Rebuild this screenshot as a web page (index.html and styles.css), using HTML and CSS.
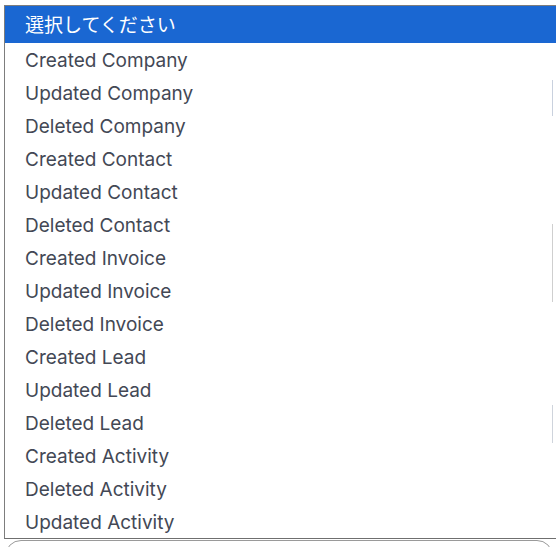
FILE: index.html
```html
<!DOCTYPE html>
<html lang="ja">
<head>
<meta charset="utf-8">
<title>Select</title>
<link rel="stylesheet" href="styles.css">
</head>
<body>
<div class="page">
  <ul class="listbox">
    <li class="option selected">選択してください</li>
    <li class="option">Created Company</li>
    <li class="option">Updated Company</li>
    <li class="option">Deleted Company</li>
    <li class="option">Created Contact</li>
    <li class="option">Updated Contact</li>
    <li class="option">Deleted Contact</li>
    <li class="option">Created Invoice</li>
    <li class="option">Updated Invoice</li>
    <li class="option">Deleted Invoice</li>
    <li class="option">Created Lead</li>
    <li class="option">Updated Lead</li>
    <li class="option">Deleted Lead</li>
    <li class="option">Created Activity</li>
    <li class="option">Deleted Activity</li>
    <li class="option">Updated Activity</li>
  </ul>
  <div class="field-under"></div>
  <span class="edge edge-a"></span>
  <span class="edge edge-b"></span>
  <span class="edge edge-c"></span>
</div>
</body>
</html>
```
FILE: styles.css
```css
html, body {
  margin: 0;
  padding: 0;
  background: #ffffff;
  overflow: hidden;
}
.page {
  position: relative;
  width: 556px;
  height: 547px;
  padding-top: 5px;
  box-sizing: border-box;
  overflow: hidden;
}
.listbox {
  list-style: none;
  margin: 0 0 0 4px;
  padding: 0;
  width: 560px;
  border-top: 1px solid #7d7d7d;
  border-left: 1px solid #7d7d7d;
  border-bottom: 1px solid #6f6f6f;
  background: #ffffff;
  font-family: Inter, "Noto Sans CJK JP", sans-serif;
  font-size: 19px;
  color: #434855;
  position: relative;
  z-index: 1;
}
.option {
  height: 33px;
  line-height: 33px;
  padding: 1px 0 0 20px;
  box-sizing: border-box;
  white-space: nowrap;
}
.option.selected {
  height: 37px;
  line-height: 34px;
  padding-top: 3px;
  background: #1a67d2;
  color: #ffffff;
}
.field-under {
  margin: 1px 3px 0 5px;
  height: 60px;
  border: 1px solid #9a9a9a;
  border-radius: 16px;
}
.edge {
  position: absolute;
  left: 552px;
  width: 1px;
  z-index: 2;
}
.edge-a { top: 80px; height: 36px; background: #c9d1de; }
.edge-b { top: 224px; height: 78px; background: #cfcfcf; }
.edge-c { top: 405px; height: 38px; background: #cfd4dc; }
```
